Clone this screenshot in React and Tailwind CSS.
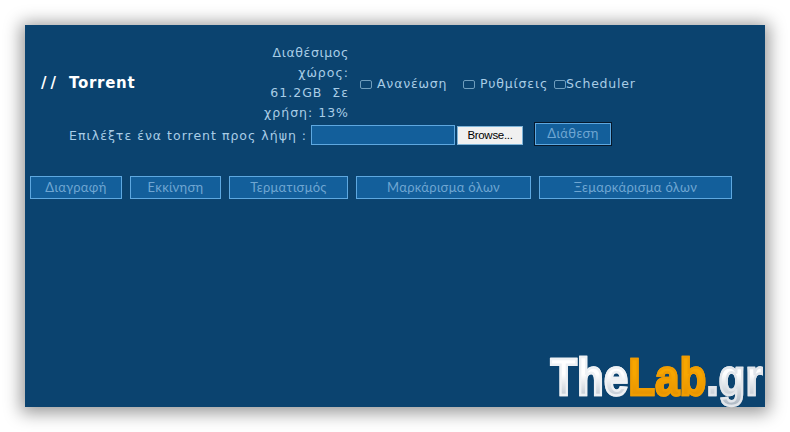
const actions = [
  { label: 'Διαγραφή', width: 'w-[92px]' },
  { label: 'Εκκίνηση', width: 'w-[91px]' },
  { label: 'Τερματισμός', width: 'w-[119px]' },
  { label: 'Μαρκάρισμα όλων', width: 'w-[175px]' },
  { label: 'Ξεμαρκάρισμα όλων', width: 'w-[193px]' },
]

const links = [
  { label: 'Ανανέωση', width: 'w-[103px]', gap: 'gap-[5px]' },
  { label: 'Ρυθμίσεις', width: 'w-[91px]', gap: 'gap-[5px]' },
  { label: 'Scheduler', width: 'w-[90px]', gap: 'gap-0' },
]

function Logo() {
  return (
    <div className="absolute bottom-[6px] right-[2px] origin-bottom-right scale-x-[0.83] whitespace-nowrap font-['Liberation_Sans',sans-serif] text-[52px] font-bold leading-[48px] tracking-[0.5px]">
      <span className="bg-gradient-to-b from-white from-45% to-[#aab5c1] bg-clip-text text-transparent [-webkit-text-stroke:2.6px_#eef1f4]">The</span>
      <span className="bg-gradient-to-b from-[#f7a600] from-45% to-[#df8a00] bg-clip-text text-transparent [-webkit-text-stroke:2.6px_#f09c00]">Lab</span>
      <span className="bg-gradient-to-b from-white from-45% to-[#aab5c1] bg-clip-text text-transparent [-webkit-text-stroke:2.6px_#e2e6eb]">.gr</span>
    </div>
  )
}

export default function App() {
  return (
    <div className="h-[432px] w-[790px] overflow-hidden bg-white pl-[25px] pt-[25px]">
      <div className="relative h-[382px] w-[740px] bg-[#0b436f] font-['DejaVu_Sans',sans-serif] text-[12.5px] tracking-[1px] text-[#a9cde6] shadow-[0_2px_16px_4px_rgba(0,0,0,0.4)]">
        <div className="flex h-[98px] items-center pt-[18px]">
          <h1 className="flex w-[124px] pl-[16px] text-[15px] font-bold tracking-[0.7px] whitespace-nowrap text-white">
            <span className="w-[28px] tracking-[4px]">//</span>
            <span>Torrent</span>
          </h1>
          <div className="w-[200px] text-right leading-[20px] whitespace-nowrap">
            <div className="tracking-[0.6px]">Διαθέσιμος</div>
            <div>χώρος:</div>
            <div>61.2GB&nbsp; Σε</div>
            <div>χρήση: 13%</div>
          </div>
          <div className="ml-[11px] flex items-center pt-[2px] tracking-[0.8px]">
            {links.map((link) => (
              <div key={link.label} className={`flex items-center ${link.width} ${link.gap}`}>
                <span className="h-[9px] w-[12px] shrink-0 rounded-[2px] border border-[#6f9dbd]" />
                <span>{link.label}</span>
              </div>
            ))}
          </div>
        </div>

        <div className="flex h-[22px] items-center">
          <span className="mt-[5px] w-[282px] text-right whitespace-nowrap">Επιλέξτε ένα torrent προς λήψη :</span>
          <div className="ml-[4px] mt-[2px] h-[20px] w-[144px] border border-[#5ea8e0] bg-[#135f9b]" />
          <button className="ml-[2px] mt-[3px] h-[19px] w-[66px] border border-[#7fb4d8] bg-[#f0f0f0] font-['Liberation_Sans',sans-serif] text-[11.5px] tracking-[-0.3px] text-black">
            Browse...
          </button>
          <button className="ml-[12px] h-[22px] w-[76px] border border-[#5ea8e0] bg-[#135f9b] font-['Lato',sans-serif] text-[13px] tracking-[0.4px] text-[#6fa6d2] outline-1 outline-[#06182b]">
            Διάθεση
          </button>
        </div>

        <div className="mt-[31px] flex gap-[8px] pl-[5px]">
          {actions.map((action) => (
            <button
              key={action.label}
              className={`h-[23px] border border-[#5ea8e0] bg-[#135f9b] font-['Lato',sans-serif] text-[13px] tracking-[0.3px] text-[#6fa6d2] ${action.width}`}
            >
              {action.label}
            </button>
          ))}
        </div>

        <Logo />
      </div>
    </div>
  )
}
